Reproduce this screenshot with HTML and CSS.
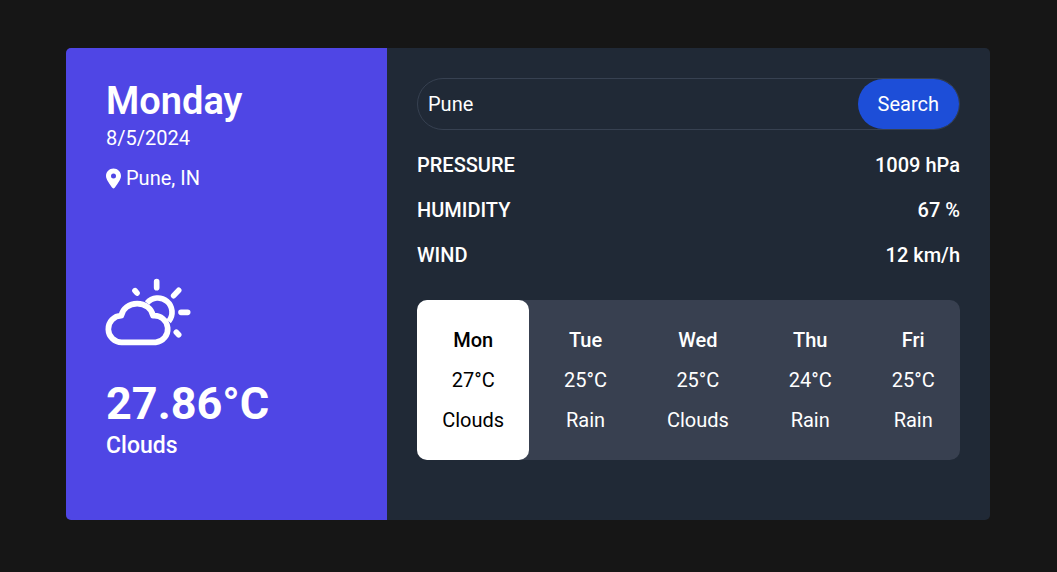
FILE: index.html
```html
<!DOCTYPE html>
<html lang="en">
<head>
  <meta charset="utf-8">
  <meta name="viewport" content="width=device-width, initial-scale=1">
  <title>Weather</title>
  <link rel="stylesheet" href="styles.css">
</head>
<body>
  <main class="card">
    <section class="today">
      <header>
        <h1 class="day">Monday</h1>
        <p class="date">8/5/2024</p>
        <p class="place">
          <svg class="pin" viewBox="0 0 384 512" aria-hidden="true"><path d="M215.7 499.200C267 435 384 279.400 384 192C384 86 298 0 192 0S0 86 0 192c0 87.400 117 243 168.300 307.200c12.300 15.300 35.100 15.300 47.400 0zM192 128a64 64 0 1 1 0 128 64 64 0 1 1 0-128z"/></svg>
          <span>Pune, IN</span>
        </p>
      </header>
      <div class="now">
        <svg class="weather-icon" viewBox="48 40 258 207" aria-hidden="true">
          <path d="M96 233A40 40 0 0 1 94 153A48 42 0 0 1 189 153A40 40 0 0 1 197 233Z"/>
          <path d="M171 115A42 42 0 0 1 236 170"/>
          <path class="ray" d="M200 51V69M251 93L266 77M273 143H293M259 203L266 210M135 78L141 85"/>
        </svg>
        <p class="temperature">27.86°C</p>
        <p class="condition">Clouds</p>
      </div>
    </section>
    <section class="details">
      <form class="search">
        <input class="search-input" type="text" value="Pune" aria-label="City">
        <button class="search-button" type="button">Search</button>
      </form>
      <dl class="metrics">
        <div class="metric"><dt>PRESSURE</dt><dd>1009 hPa</dd></div>
        <div class="metric"><dt>HUMIDITY</dt><dd>67 %</dd></div>
        <div class="metric"><dt>WIND</dt><dd>12 km/h</dd></div>
      </dl>
      <ul class="forecast">
        <li class="forecast-day active"><strong>Mon</strong><span>27°C</span><span>Clouds</span></li>
        <li class="forecast-day"><strong>Tue</strong><span>25°C</span><span>Rain</span></li>
        <li class="forecast-day"><strong>Wed</strong><span>25°C</span><span>Clouds</span></li>
        <li class="forecast-day"><strong>Thu</strong><span>24°C</span><span>Rain</span></li>
        <li class="forecast-day"><strong>Fri</strong><span>25°C</span><span>Rain</span></li>
      </ul>
    </section>
  </main>
</body>
</html>
```
FILE: styles.css
```css
* {
  box-sizing: border-box;
  margin: 0;
  padding: 0;
}

body {
  padding: 48px 67px 48px 66px;
  background: #161616;
  color: #fff;
  font: 20px/30px Roboto, sans-serif;
}

.card {
  display: flex;
  max-width: 924px;
  margin: 0 auto;
  border-radius: 5px;
  background: #202936;
  overflow: hidden;
}

.today {
  display: flex;
  flex: 0 0 321px;
  flex-direction: column;
  justify-content: space-between;
  gap: 80px;
  padding: 30px 40px 59px;
  background: #4f46e5;
}

.day {
  padding-top: 1px;
  font-size: 38px;
  line-height: 44px;
  font-weight: 600;
}

.place {
  display: flex;
  align-items: center;
  gap: 5px;
  margin-top: 10px;
}

.pin {
  width: 15px;
  height: 21px;
  fill: #fff;
}

.weather-icon {
  display: block;
  width: 86px;
  height: 69px;
  overflow: visible;
  fill: none;
  stroke: #fff;
  stroke-width: 17;
  stroke-linejoin: round;
}

.ray {
  stroke-linecap: round;
}

.temperature {
  margin-top: 30px;
  font-size: 45px;
  line-height: 54px;
  font-weight: 700;
}

.condition {
  font-size: 23px;
  font-weight: 500;
}

.details {
  flex: 1;
  min-width: 0;
  padding: 30px 30px 60px;
}

.search {
  display: flex;
  height: 52px;
  border: 1px solid #374151;
  border-radius: 26px;
}

.search-input {
  flex: 1;
  min-width: 0;
  padding: 0 10px;
  border: 0;
  border-radius: 26px;
  outline: none;
  background: transparent;
  color: inherit;
  font: inherit;
}

.search-button {
  padding: 0 20px;
  border: 0;
  border-radius: 26px;
  background: #1d4ed8;
  color: inherit;
  font: inherit;
  cursor: pointer;
}

.metrics {
  display: grid;
  gap: 15px;
  margin: 20px 0 30px;
  font-weight: 500;
}

.metric {
  display: flex;
  justify-content: space-between;
}

.forecast {
  display: grid;
  grid-template-columns: repeat(4, 6fr) 5fr;
  border-radius: 10px;
  background: #384050;
  list-style: none;
}

.forecast-day {
  display: flex;
  flex-direction: column;
  align-items: center;
  gap: 10px;
  padding: 25px 0;
  border-radius: 10px;
}

.forecast-day strong {
  font-weight: 500;
}

.active {
  background: #fff;
  color: #000;
}
```
